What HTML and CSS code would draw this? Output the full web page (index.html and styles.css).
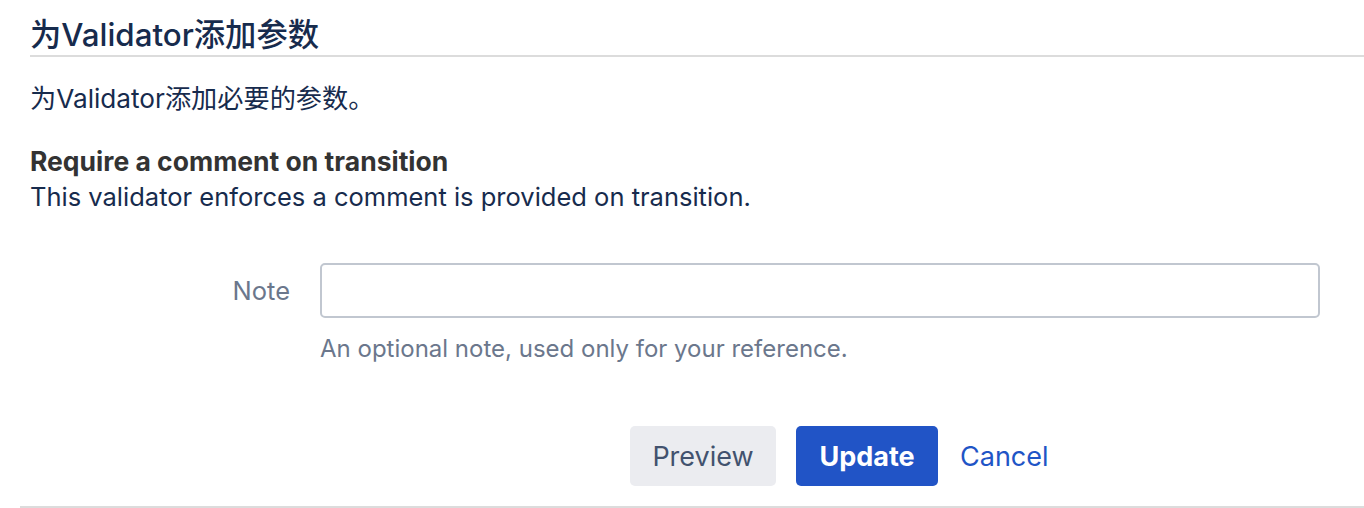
FILE: index.html
```html
<!DOCTYPE html>
<html lang="zh">
<head>
<meta charset="utf-8">
<title>为Validator添加参数</title>
<link rel="stylesheet" href="styles.css">
</head>
<body>
<div class="page">
  <div class="inner">
    <h2 class="title">为Validator添加参数</h2>
    <p class="intro">为Validator添加必要的参数。</p>
    <div class="validator">
      <div class="v-name">Require a comment on transition</div>
      <div class="v-desc">This validator enforces a comment is provided on transition.</div>
    </div>
    <div class="field">
      <label class="label" for="note">Note</label>
      <div class="control">
        <input class="input" id="note" type="text">
        <div class="help">An optional note, used only for your reference.</div>
      </div>
    </div>
    <div class="actions">
      <button class="btn btn-default" type="button">Preview</button>
      <button class="btn btn-primary" type="button">Update</button>
      <a class="link" href="#">Cancel</a>
    </div>
  </div>
</div>
</body>
</html>
```

FILE: styles.css
```css
html, body {
  margin: 0;
  padding: 0;
  background: #fff;
}
body {
  font-family: Inter, "Noto Sans CJK SC", sans-serif;
  color: #172B4D;
}
.page {
  margin-left: 20px;
  border-bottom: 2px solid #dcdcdc;
  height: 508px;
  box-sizing: border-box;
  overflow: hidden;
}
.inner {
  padding-left: 10px;
}
.title {
  margin: 0;
  padding-top: 17px;
  padding-bottom: 2px;
  font-size: 31.3px;
  line-height: 36px;
  font-weight: 500;
  color: #172B4D;
  border-bottom: 2px solid #dcdcdc;
}
.intro {
  margin: 0;
  padding-top: 26px;
  font-size: 26.2px;
  line-height: 32px;
}
.validator {
  padding-top: 30px;
}
.v-name {
  font-size: 26.5px;
  line-height: 32px;
  font-weight: 700;
  color: #333;
}
.v-desc {
  font-size: 25.5px;
  line-height: 40px;
}
.field {
  display: flex;
  gap: 30px;
  margin-top: 46px;
}
.label {
  width: 260px;
  text-align: right;
  font-size: 25.5px;
  line-height: 55px;
  color: #6B778C;
}
.control {
  flex: 1;
  margin-right: 44px;
}
.input {
  display: block;
  width: 100%;
  box-sizing: border-box;
  height: 55px;
  border: 2px solid #C1C7D0;
  border-radius: 5px;
  background: #fff;
  margin: 0;
}
.help {
  font-size: 24px;
  line-height: 32px;
  margin-top: 15px;
  color: #6B778C;
}
.actions {
  display: flex;
  align-items: center;
  padding-left: 600px;
  margin-top: 61px;
}
.btn {
  font-family: inherit;
  font-size: 27px;
  height: 60px;
  border: none;
  border-radius: 5px;
  padding: 0;
  cursor: pointer;
}
.btn-default {
  background: #EBECF0;
  color: #42526E;
  width: 146px;
}
.btn-primary {
  background: #2154C6;
  color: #fff;
  font-weight: 700;
  width: 142px;
  margin-left: 20px;
}
.link {
  font-size: 27px;
  color: #1F55C6;
  text-decoration: none;
  margin-left: 22px;
}
```
